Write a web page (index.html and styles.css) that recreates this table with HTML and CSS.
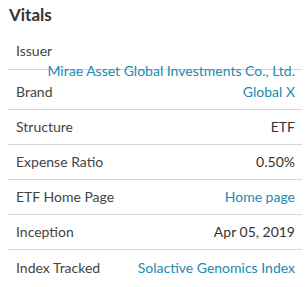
FILE: index.html
```html
<!DOCTYPE html>
<html>
<head>
<meta charset="utf-8">
<link rel="stylesheet" href="styles.css">
</head>
<body>
<section class="vitals">
  <h2 class="title">Vitals</h2>
  <div class="row row-issuer">
    <div class="label">Issuer</div>
    <div class="value link wrap">Mirae Asset Global Investments Co., Ltd.</div>
  </div>
  <div class="row row-brand">
    <div class="label">Brand</div>
    <div class="value link">Global X</div>
  </div>
  <div class="row">
    <div class="label">Structure</div>
    <div class="value">ETF</div>
  </div>
  <div class="row">
    <div class="label">Expense Ratio</div>
    <div class="value">0.50%</div>
  </div>
  <div class="row">
    <div class="label">ETF Home Page</div>
    <div class="value link">Home page</div>
  </div>
  <div class="row">
    <div class="label">Inception</div>
    <div class="value">Apr 05, 2019</div>
  </div>
  <div class="row row-last">
    <div class="label">Index Tracked</div>
    <div class="value link">Solactive Genomics Index</div>
  </div>
</section>
</body>
</html>
```
FILE: styles.css
```css
html, body {
  margin: 0;
  padding: 0;
  background: #fff;
}
body {
  font-family: "Lato", "Open Sans", sans-serif;
  color: #333;
}
.vitals {
  margin: 0 6px 0 8px;
}
.title {
  margin: 0;
  height: 34px;
  box-sizing: border-box;
  padding-top: 5px;
  font-size: 17px;
  line-height: 20px;
  font-weight: 700;
  color: #333;
  padding-left: 1px;
}
.row {
  display: flex;
  justify-content: space-between;
  align-items: center;
  height: 35px;
  box-sizing: border-box;
  padding: 0 7px 0 8px;
  border-bottom: 1px solid #d6d6d6;
  font-size: 14px;
  line-height: 16px;
}
.row-issuer {
  display: block;
  height: 36px;
  padding-top: 9px;
}
.row-issuer .wrap {
  margin-top: 4px;
  text-align: right;
}
.row-brand {
  height: 40px;
  padding-top: 5px;
}
.row-last {
  border-bottom: none;
}
.label {
  color: #444;
}
.value {
  color: #333;
  text-align: right;
}
.link {
  color: #2089b2;
}
```
